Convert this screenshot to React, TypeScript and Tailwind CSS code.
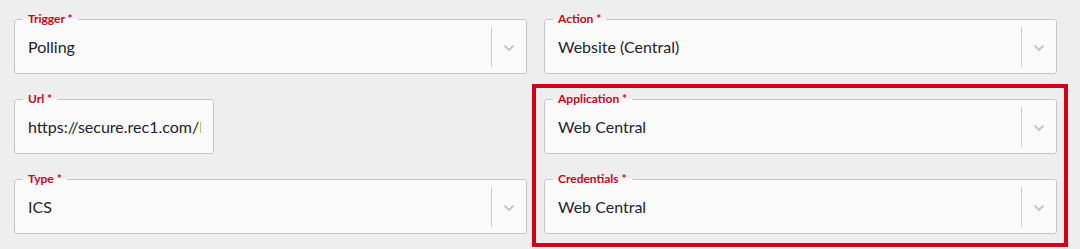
import React from "react"

const font = { fontFamily: "Lato, 'Open Sans', sans-serif" }

function Chevron() {
  return (
    <svg width="12" height="8" viewBox="0 0 12 8" fill="none">
      <polyline points="1.5,1.5 6,6 10.5,1.5" stroke="#c6c6c6" strokeWidth="2" />
    </svg>
  )
}

function Field({
  label,
  value,
  select = true,
  className = ""
}: {
  label: string
  value: string
  select?: boolean
  className?: string
}) {
  return (
    <fieldset
      className={
        "border border-[#c6c6c6] rounded-[3px] bg-[#fafafa] min-w-0 " + className
      }
    >
      <legend className="ml-[8px] px-[5px] text-[12px] leading-[14px] font-bold text-[#d0021b]">
        {label} *
      </legend>
      <div className="flex h-[47px] items-center pb-[5px]">
        {select ? (
          <>
            <div className="flex-1 truncate pl-[13px] text-[16px] text-[#1f2230]">
              {value}
            </div>
            <div className="h-10 w-px bg-[#cccccc]" />
            <div className="flex w-[34px] justify-center pt-[2px]">
              <Chevron />
            </div>
          </>
        ) : (
          <input
            readOnly
            value={value}
            className="w-full min-w-0 bg-transparent pl-[13px] pr-[12px] text-[16px] text-[#1f2230] outline-none"
            style={font}
          />
        )}
      </div>
    </fieldset>
  )
}

export default function App() {
  return (
    <div
      className="w-[1080px] h-[249px] bg-[#eeeeee] pl-[14px] pr-[23px] pt-[12px] overflow-hidden"
      style={font}
    >
      <div className="flex gap-[17px]">
        <div className="flex w-[513px] flex-col gap-[18px]">
          <Field label="Trigger" value="Polling" />
          <Field label="Url" value="https://secure.rec1.com/RW" select={false} className="w-[200px]" />
          <Field label="Type" value="ICS" />
        </div>
        <div className="flex w-[513px] flex-col">
          <Field label="Action" value="Website (Central)" />
          <div className="mt-[10px] -ml-[12px] -mr-[11px] border-4 border-[#d0021b] pt-[4px] pl-[8px] pr-[7px] pb-[9px]">
            <div className="flex flex-col gap-[18px]">
              <Field label="Application" value="Web Central" />
              <Field label="Credentials" value="Web Central" />
            </div>
          </div>
        </div>
      </div>
    </div>
  )
}
